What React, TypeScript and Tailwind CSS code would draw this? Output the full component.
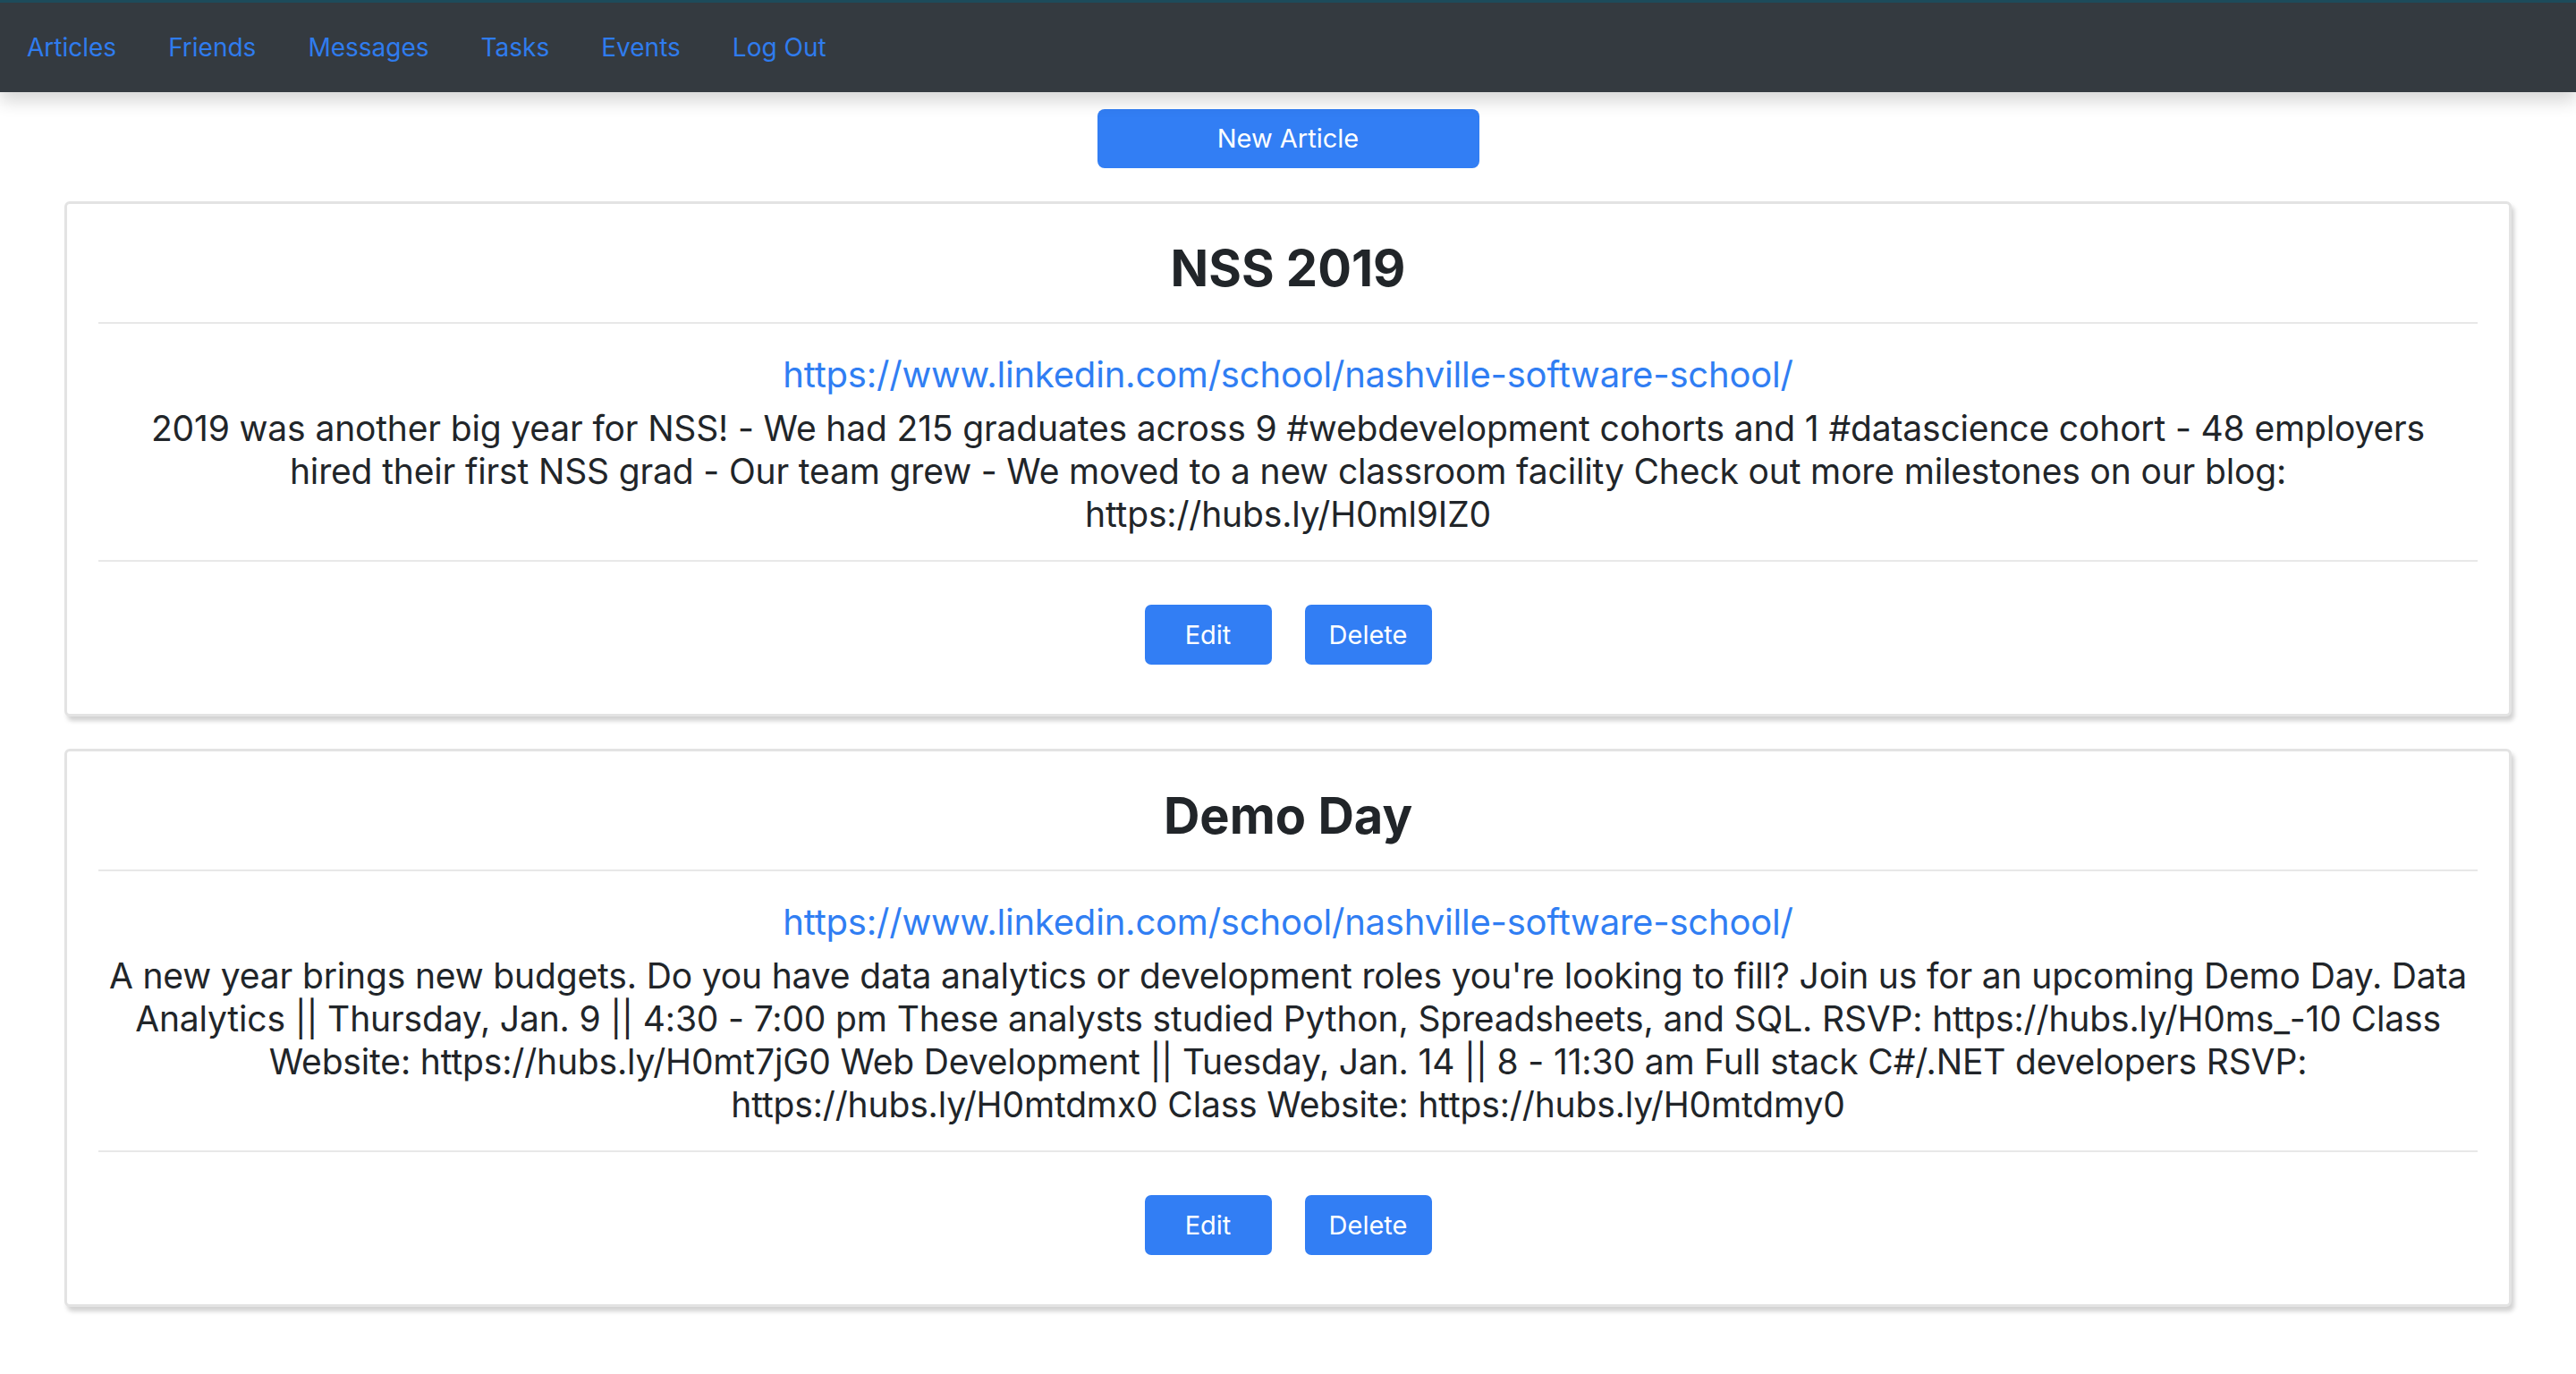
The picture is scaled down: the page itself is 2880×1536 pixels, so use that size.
import React from "react";

interface Article {
  id: number;
  title: string;
  url: string;
  lines: string[];
}

const articles: Article[] = [
  {
    id: 1,
    title: "NSS 2019",
    url: "https://www.linkedin.com/school/nashville-software-school/",
    lines: [
      "2019 was another big year for NSS! - We had 215 graduates across 9 #webdevelopment cohorts and 1 #datascience cohort - 48 employers",
      "hired their first NSS grad - Our team grew - We moved to a new classroom facility Check out more milestones on our blog:",
      "https://hubs.ly/H0ml9IZ0",
    ],
  },
  {
    id: 2,
    title: "Demo Day",
    url: "https://www.linkedin.com/school/nashville-software-school/",
    lines: [
      "A new year brings new budgets. Do you have data analytics or development roles you're looking to fill? Join us for an upcoming Demo Day. Data",
      "Analytics || Thursday, Jan. 9 || 4:30 - 7:00 pm These analysts studied Python, Spreadsheets, and SQL. RSVP: https://hubs.ly/H0ms_-10 Class",
      "Website: https://hubs.ly/H0mt7jG0 Web Development || Tuesday, Jan. 14 || 8 - 11:30 am Full stack C#/.NET developers RSVP:",
      "https://hubs.ly/H0mtdmx0 Class Website: https://hubs.ly/H0mtdmy0",
    ],
  },
];

const navLinks = ["Articles", "Friends", "Messages", "Tasks", "Events", "Log Out"];

function ArticleCard({ article }: { article: Article }) {
  return (
    <div className="bg-white border-[3px] border-[#e3e3e3] rounded-[6px] shadow-[3px_5px_5px_rgba(0,0,0,0.18)] px-[35px] pt-[40px] pb-[55px] text-center">
      <h2 className="text-[56px] leading-[64px] font-bold text-[#212529]">
        {article.title}
      </h2>
      <hr className="mt-[28px] border-t-2 border-[#e8e8e8]" />
      <a
        href={article.url}
        className="block mt-[33px] text-[40px] leading-[48px] tracking-[-0.2px] text-[#307ef3]"
      >
        {article.url}
      </a>
      <div className="mt-[12px] text-[39px] leading-[48px] tracking-[-0.15px] text-[#212529]">
        {article.lines.map((line, i) => (
          <p key={i} className="whitespace-nowrap">
            {line}
          </p>
        ))}
      </div>
      <hr className="mt-[27px] border-t-2 border-[#e8e8e8]" />
      <div className="mt-[48px] flex justify-center gap-[37px]">
        <button className="w-[142px] h-[67px] rounded-[7px] bg-[#327ef4] text-white text-[29px]">
          Edit
        </button>
        <button className="w-[142px] h-[67px] rounded-[7px] bg-[#327ef4] text-white text-[29px]">
          Delete
        </button>
      </div>
    </div>
  );
}

export default function App() {
  return (
    <div
      className="min-h-screen bg-white"
      style={{ fontFamily: "Inter, 'Noto Sans', sans-serif" }}
    >
      <nav className="h-[103px] bg-[#343a40] border-t-[3px] border-[#1d4b5b] shadow-[0_10px_18px_rgba(0,0,0,0.16)] flex items-center pl-[30px] gap-[58px] relative z-10">
        {navLinks.map((link) => (
          <a key={link} href="#" className="text-[28px] text-[#2f7cee]">
            {link}
          </a>
        ))}
      </nav>

      <div className="flex justify-center mt-[19px]">
        <button className="w-[427px] h-[66px] rounded-[8px] bg-[#327ef4] text-white text-[29px]">
          New Article
        </button>
      </div>

      <div className="mx-[72px] mt-[37px] flex flex-col gap-[36px] pb-[60px]">
        {articles.map((article) => (
          <ArticleCard key={article.id} article={article} />
        ))}
      </div>
    </div>
  );
}
